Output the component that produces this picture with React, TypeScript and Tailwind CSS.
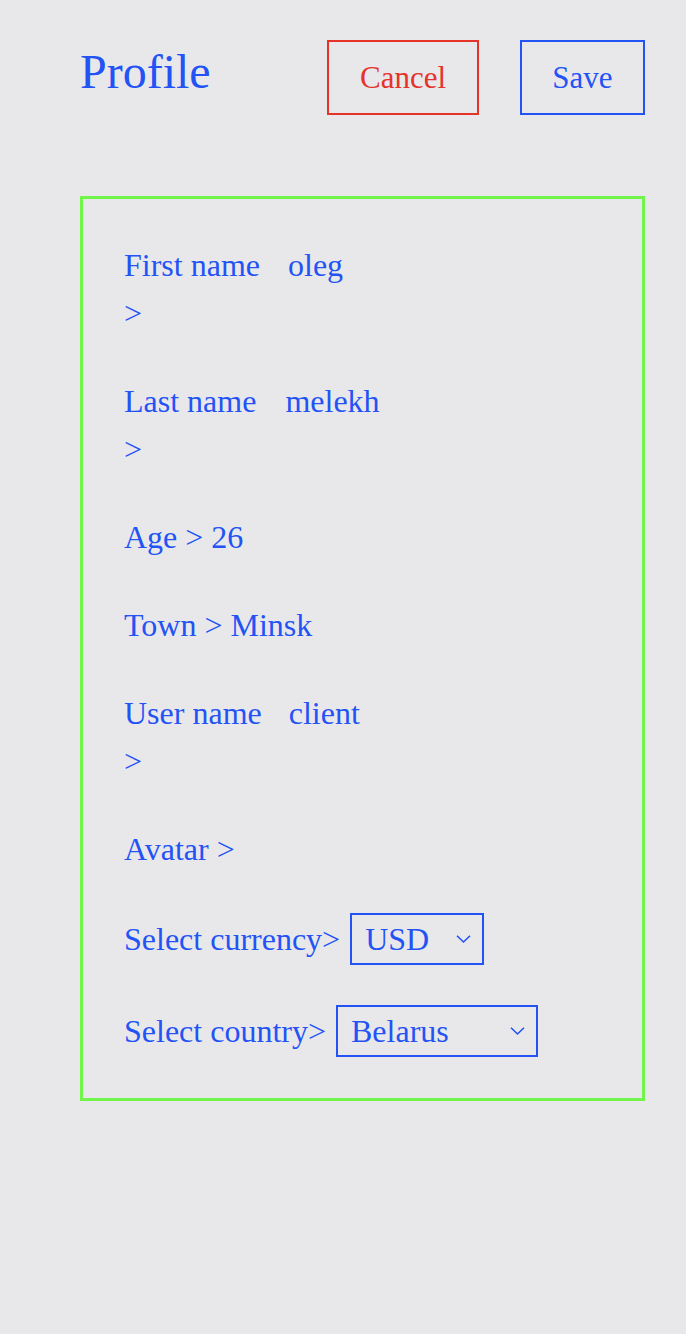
import React from "react";

function Chevron() {
  return (
    <svg
      width="15"
      height="9"
      viewBox="0 0 15 9"
      fill="none"
      className="pointer-events-none absolute right-[11px] top-1/2 -translate-y-1/2"
    >
      <path d="M1 1.2 L7.5 7.5 L14 1.2" stroke="#2453f5" strokeWidth="1.6" />
    </svg>
  );
}

function Select({ value, options, width }: { value: string; options: string[]; width: string }) {
  return (
    <div className={`relative ml-[10px] h-[52px] ${width} border-2 border-[#2453f5]`}>
      <select
        defaultValue={value}
        className="h-full w-full appearance-none bg-transparent pl-[13px] pr-[30px] text-[32px] leading-[48px] text-[#2453f5] outline-none"
        style={{ fontFamily: '"Liberation Serif", "Times New Roman", serif' }}
      >
        {options.map((o) => (
          <option key={o}>{o}</option>
        ))}
      </select>
      <Chevron />
    </div>
  );
}

export default function App() {
  return (
    <div
      className="min-h-[1334px] w-full bg-[#e8e8ea] pl-[80px] pr-[41px] pt-[40px] text-[#2453f5]"
      style={{ fontFamily: '"Liberation Serif", "Times New Roman", serif' }}
    >
      <div className="flex items-start">
        <h1 className="mt-[8px] flex-1 text-[48px] leading-[48px]">Profile</h1>
        <button className="h-[75px] w-[152px] border-2 border-[#e5332a] pt-[2px] text-[31px] text-[#e5332a]">
          Cancel
        </button>
        <button className="ml-[41px] h-[75px] w-[125px] border-2 border-[#2453f5] pt-[2px] text-[31px] text-[#2453f5]">
          Save
        </button>
      </div>

      <div className="mt-[81px] flex flex-col gap-[40px] border-[3px] border-[#72f54a] px-[41px] pb-[41px] pt-[42px] text-[32px] leading-[48px]">
        <div>
          <div className="flex gap-[28px]">
            <span>First name</span>
            <span>oleg</span>
          </div>
          <div>&gt;</div>
        </div>
        <div>
          <div className="flex gap-[29px]">
            <span>Last name</span>
            <span>melekh</span>
          </div>
          <div>&gt;</div>
        </div>
        <div>Age &gt; 26</div>
        <div>Town &gt; Minsk</div>
        <div>
          <div className="flex gap-[27px]">
            <span>User name</span>
            <span>client</span>
          </div>
          <div>&gt;</div>
        </div>
        <div>Avatar &gt;</div>
        <div className="flex items-center">
          <span>Select currency&gt;</span>
          <Select value="USD" options={["USD", "EUR", "BYN"]} width="w-[134px]" />
        </div>
        <div className="flex items-center">
          <span>Select country&gt;</span>
          <Select value="Belarus" options={["Belarus", "Russia", "Poland"]} width="w-[202px]" />
        </div>
      </div>
    </div>
  );
}
